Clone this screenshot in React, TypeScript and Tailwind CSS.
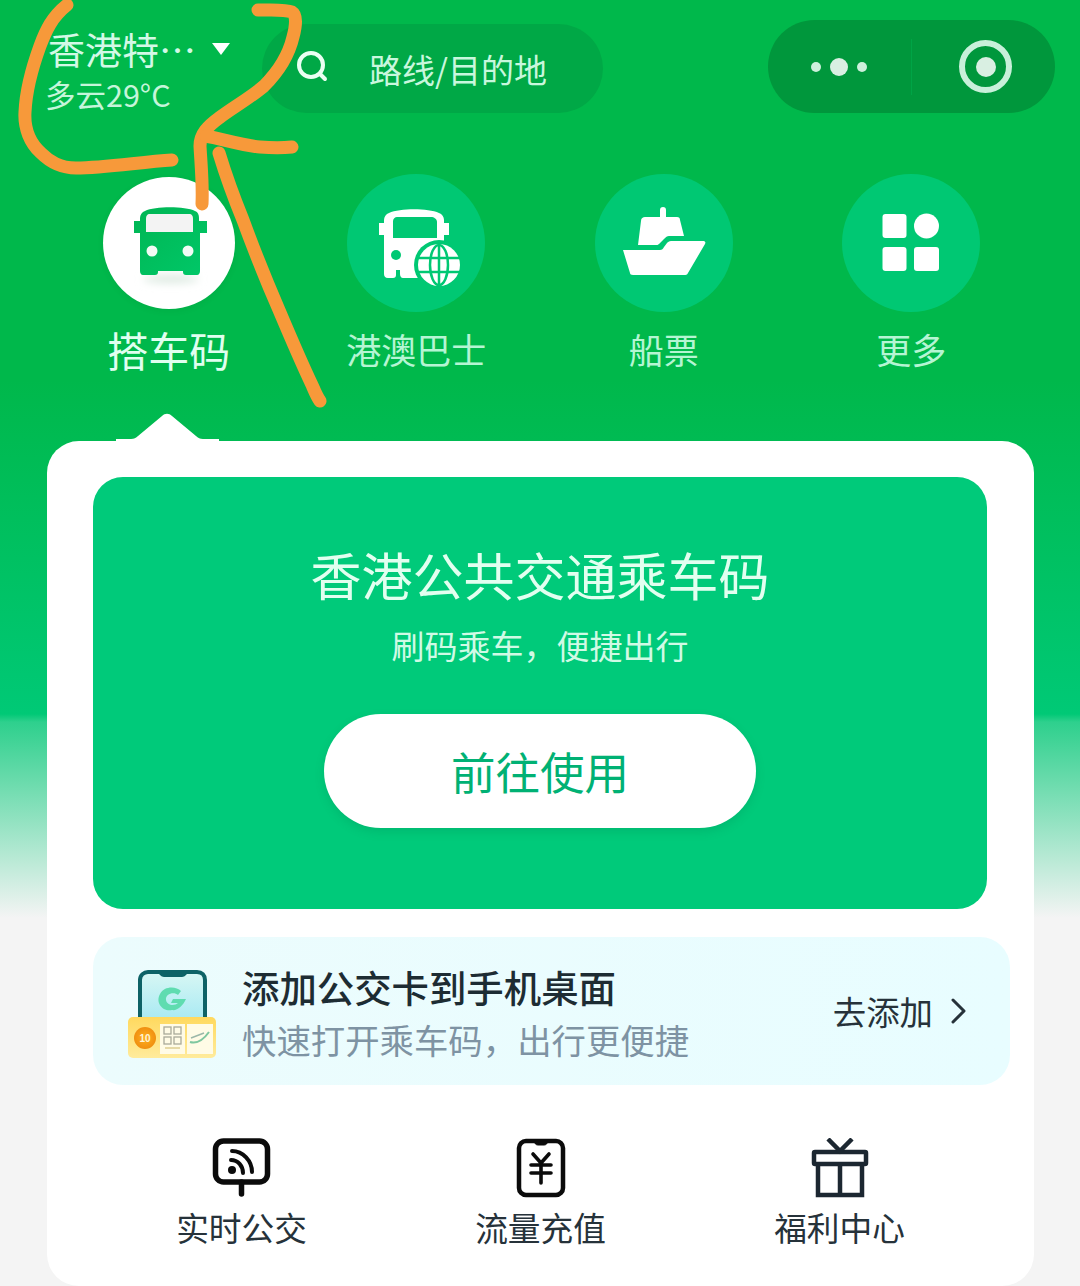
import React from "react";

const ORANGE = "#f7993a";

function Scribble() {
  return (
    <svg className="absolute left-0 top-0 pointer-events-none" width="340" height="420" viewBox="0 0 340 420" fill="none" stroke={ORANGE} strokeWidth="13" strokeLinecap="round" strokeLinejoin="round">
      <path d="M67 5C52 17 46 30 40 46C32 68 26 90 25 112C24 128 30 143 41 153C50 162 60 168 76 168C105 168 140 162 172 160" />
      <path d="M258 10C272 10 285 9 292 12C297 15 296 26 293 37C289 54 280 70 264 86C250 98 232 108 219 118C208 126 200 134 200 146C201 165 203 184 202 204" />
      <path d="M206 136C222 139 245 146 260 147C272 148 283 148 292 147" />
      <path d="M219 153C226 176 234 198 243 220C254 250 266 280 279 310C290 336 302 364 312 385C315 392 317 397 320 401" />
    </svg>
  );
}

function BusIcon() {
  return (
    <svg width="132" height="132" viewBox="103 177 132 132">
      <defs>
        <linearGradient id="busg" x1="0" y1="0" x2="1" y2="1">
          <stop offset="0" stopColor="#00b553" />
          <stop offset="1" stopColor="#00c868" />
        </linearGradient>
        <filter id="busb" x="-30%" y="-200%" width="160%" height="500%">
          <feGaussianBlur stdDeviation="4" />
        </filter>
      </defs>
      <ellipse cx="171" cy="279" rx="28" ry="4" fill="#dbe9e0" filter="url(#busb)" />
      <path d="M145 211C155 206 185 206 195 211C198 212 199 215 199 218V221H207V233H200V271C200 273 199 275 197 275H186C184 275 183 274 183 272V271H158V272C158 274 157 275 155 275H143C141 275 140 273 140 271V233H134V221H140V218C140 215 142 212 145 211Z" fill="url(#busg)" />
      <path d="M150 214H189C192 214 193 216 193 219V232H146V219C146 216 147 214 150 214Z" fill="#f3f3f3" />
      <circle cx="152" cy="251" r="5.5" fill="#f2fbf5" />
      <circle cx="188" cy="251" r="5.5" fill="#f2fbf5" />
    </svg>
  );
}

function BusGlobeIcon() {
  return (
    <svg width="138" height="138" viewBox="347 174 138 138">
      <path d="M389 213C400 208 428 208 439 213C442 214 444 217 444 220V223H449V235H444V270C444 274 442 278 438 278H403C401 278 400 276 400 274V270H396V275C396 277 395 278 393 278H388C385 278 384 276 384 274V235H379V223H384V220C384 217 386 214 389 213Z" fill="#fff" />
      <path d="M397 217H431C434 217 437 219 437 222V238H393V221C393 219 395 217 397 217Z" fill="#00c873" />
      <circle cx="396" cy="255" r="5" fill="#00c873" />
      <circle cx="439" cy="265" r="25" fill="#00c873" />
      <circle cx="439" cy="265" r="21" fill="#fff" />
      <g fill="none" stroke="#00c873" strokeWidth="2.5">
        <ellipse cx="439" cy="265" rx="9" ry="20" />
        <path d="M439 245V285M419 258H459M419 272H459" />
      </g>
    </svg>
  );
}

function ShipIcon() {
  return (
    <svg width="138" height="138" viewBox="595 174 138 138" fill="#fff">
      <path d="M660 214V210C660 208 661 207 663 207C665 207 666 208 666 210V217H677C679 217 680 218 680 220L684 236H669C667 236 666 237 664 239L659 244C658 245 657 245 656 245H638L641 221C641 218 643 217 645 217H660Z" />
      <path d="M623 250H660C662 250 663 249 664 247L667 243C668 242 669 241 671 241H703C705 241 706 242 705 244L688 273C687 275 686 275 684 275H633C631 275 630 274 630 273L623 250Z" />
    </svg>
  );
}

function MoreIcon() {
  return (
    <svg width="138" height="138" viewBox="842 174 138 138" fill="#fff">
      <rect x="882.5" y="214" width="24" height="24" rx="3" />
      <circle cx="926.5" cy="226" r="12.5" />
      <rect x="882.5" y="247" width="24" height="24" rx="3" />
      <rect x="914" y="247" width="25" height="24" rx="3" />
    </svg>
  );
}

function CardArt() {
  return (
    <svg width="92" height="94" viewBox="126 970 92 94" className="shrink-0">
      <defs>
        <linearGradient id="scr" x1="0" y1="0" x2="0" y2="1">
          <stop offset="0" stopColor="#d8f7f4" />
          <stop offset="1" stopColor="#a6e9f3" />
        </linearGradient>
        <linearGradient id="yel" x1="0" y1="0" x2="0" y2="1">
          <stop offset="0" stopColor="#ffd95e" />
          <stop offset="1" stopColor="#ffeb9c" />
        </linearGradient>
        <radialGradient id="coin">
          <stop offset="0" stopColor="#ffb020" />
          <stop offset="1" stopColor="#f08f10" />
        </radialGradient>
      </defs>
      <path d="M140 1024V982C140 977 144 974 148 974H197C202 974 205 977 205 982V1024Z" fill="url(#scr)" stroke="#0d6266" strokeWidth="4" />
      <path d="M158 974H188C186 978 184 979 181 979H165C162 979 160 978 158 974Z" fill="#0d6266" />
      <path d="M181 993C176 988 164 988 160 996C155 1005 163 1014 172 1012C177 1013 183 1008 186 1001H173L171 1005H178C175 1008 167 1008 166 1002C165 996 174 993 178 997Z" fill="#5fdcb0" />
      <rect x="128" y="1019" width="88" height="41" rx="5" fill="url(#yel)" />
      <circle cx="145" cy="1040" r="11" fill="url(#coin)" />
      <text x="145" y="1044" textAnchor="middle" fontSize="10" fontWeight="700" fill="#fff5d8" fontFamily="Liberation Sans, sans-serif">10</text>
      <rect x="160" y="1026" width="25" height="30" fill="#fffbe6" />
      <rect x="187" y="1026" width="26" height="30" fill="#fffbe6" />
      <g fill="none" stroke="#a9a99a" strokeWidth="1.3">
        <rect x="164" y="1029" width="7" height="7" />
        <rect x="174" y="1029" width="7" height="7" />
        <rect x="164" y="1039" width="7" height="7" />
        <rect x="174" y="1039" width="7" height="7" />
      </g>
      <path d="M165 1050H180" stroke="#e6d9a6" strokeWidth="2" />
      <path d="M190 1044C197 1046 204 1041 209 1034" stroke="#7fc7a0" strokeWidth="2" fill="none" />
      <path d="M191 1040L204 1035" stroke="#9bb7a8" strokeWidth="1.5" />
    </svg>
  );
}

function RssIcon() {
  return (
    <svg width="60" height="60" viewBox="212 1138 60 60" fill="none" stroke="#0b0b0b" strokeLinecap="round">
      <rect x="215.5" y="1141" width="52" height="41" rx="8" strokeWidth="5.5" />
      <path d="M241.5 1182V1194" strokeWidth="5.5" />
      <circle cx="232" cy="1170" r="4" fill="#0b0b0b" stroke="none" />
      <path d="M231 1160C238 1160 243 1166 243 1173" strokeWidth="4" />
      <path d="M232 1151C243 1151 252 1161 252 1172" strokeWidth="4" />
    </svg>
  );
}

function YenPhoneIcon() {
  return (
    <svg width="60" height="60" viewBox="511 1138 60 60" fill="none" stroke="#0b0b0b" strokeLinecap="round">
      <rect x="519" y="1141" width="44" height="54" rx="7" strokeWidth="4.5" />
      <path d="M534 1141H548C547 1144 546 1145 544 1145H538C536 1145 535 1144 534 1141Z" fill="#0b0b0b" strokeWidth="1" />
      <path d="M533 1154L541 1163L549 1154M531 1165H551M531 1173H551M541 1163V1183" strokeWidth="3.6" />
    </svg>
  );
}

function GiftIcon() {
  return (
    <svg width="60" height="60" viewBox="810 1138 60 60" fill="none" stroke="#1c2731" strokeWidth="4.5">
      <rect x="814" y="1152" width="52" height="12" rx="1" />
      <path d="M818 1164V1195H862V1164M840 1164V1195" />
      <path d="M828 1139L840 1151L852 1139" />
    </svg>
  );
}

function NavItem({ label, children }: { label: string; children: React.ReactNode }) {
  return (
    <div className="flex flex-col items-center">
      <div className="w-[138px] h-[138px] rounded-full bg-[#00c873]">{children}</div>
      <div className="mt-[12px] text-[35px] leading-[50px] text-[#b5f5d3] whitespace-nowrap">{label}</div>
    </div>
  );
}

function Tool({ label, children }: { label: string; children: React.ReactNode }) {
  return (
    <div className="flex flex-col items-center">
      {children}
      <div className="mt-[7px] text-[32.7px] leading-[44px] text-[#26323a] whitespace-nowrap">{label}</div>
    </div>
  );
}

export default function App() {
  return (
    <div className="relative w-[1080px] h-[1286px] overflow-hidden font-['Noto_Sans_CJK_SC','Noto_Sans',sans-serif] bg-[linear-gradient(180deg,#00b84b_0px,#00b84b_380px,#00c976_714px,#2ed08d_722px,#f4f4f4_918px)]">
      <div className="flex items-start pt-[20px] h-[113px]">
        <div className="w-[216px] ml-[46px] pt-[8px] shrink-0">
          <div className="flex items-center h-[42px] pl-[2px]">
            <span className="text-[37px] leading-[42px] text-[#d3f9e6] whitespace-nowrap">香港特…</span>
            <svg className="ml-[15px] -mt-[1px] shrink-0" width="20" height="14" viewBox="0 0 20 14"><path d="M1 1H19L10 13Z" fill="#fff" /></svg>
          </div>
          <div className="mt-[3px] -ml-[1px] text-[30.5px] leading-[42px] text-[#c5f5da] whitespace-nowrap">多云29°C</div>
        </div>
        <div className="mt-[4px] w-[341px] h-[89px] rounded-full bg-[#00a846] flex items-center shrink-0">
          <svg className="ml-[32px] -mt-[5px]" width="36" height="36" viewBox="0 0 36 36" fill="none" stroke="#eafff3" strokeLinecap="round">
            <circle cx="17" cy="17" r="12" strokeWidth="4" />
            <path d="M26 26L31 31" strokeWidth="4" />
          </svg>
          <span className="ml-[39px] text-[33px] leading-[44px] text-[#c8f7dd] whitespace-nowrap">路线/目的地</span>
        </div>
        <div className="ml-auto mr-[25px] w-[287px] h-[93px] rounded-full bg-[#00973c] flex items-center">
          <div className="w-[143px] h-full flex items-center justify-center gap-[9px] pr-[2px]">
            <span className="w-[10px] h-[10px] rounded-full bg-[#cdf0dc]" />
            <span className="w-[18px] h-[18px] rounded-full bg-[#d9efe2]" />
            <span className="w-[10px] h-[10px] rounded-full bg-[#cdf0dc]" />
          </div>
          <div className="w-px h-[56px] bg-[#00a446]" />
          <div className="flex-1 h-full flex items-center justify-center pl-[4px]">
            <div className="w-[53px] h-[53px] rounded-full border-[6px] border-[#c8f0da] flex items-center justify-center">
              <div className="w-[20px] h-[20px] rounded-full bg-[#d9efe2]" />
            </div>
          </div>
        </div>
      </div>

      <div className="mt-[61px] ml-[45px] w-[990px] grid grid-cols-4">
        <div className="flex flex-col items-center">
          <div className="mt-[3px] w-[132px] h-[132px] rounded-full bg-white shadow-[0_2px_6px_rgba(0,80,30,0.08)]"><BusIcon /></div>
          <div className="mt-[15px] text-[41px] leading-[50px] text-[#e0fff0] whitespace-nowrap">搭车码</div>
        </div>
        <NavItem label="港澳巴士"><BusGlobeIcon /></NavItem>
        <NavItem label="船票"><ShipIcon /></NavItem>
        <NavItem label="更多"><MoreIcon /></NavItem>
      </div>

      <div className="relative mt-[67px] ml-[47px] w-[987px] h-[845px] rounded-[32px] bg-white">
        <svg className="absolute left-[68px] -top-[28px]" width="106" height="29" viewBox="0 0 106 29">
          <path d="M1 29V26H16C19 26 21 25 23 23L47 3C50 0 54 0 57 3L81 23C83 25 85 26 88 26H104V29Z" fill="#fff" />
        </svg>

        <div className="pt-[36px] pl-[46px]">
          <div className="w-[894px] h-[432px] rounded-[30px] bg-[#00ca7a] flex flex-col items-center pt-[65px]">
            <div className="text-[51px] leading-[64px] text-[#e2fff0] whitespace-nowrap">香港公共交通乘车码</div>
            <div className="mt-[15px] text-[33px] leading-[48px] text-[#d0fae5] whitespace-nowrap">{"刷码乘车\uFF0C便捷出行"}</div>
            <div className="mt-[45px] w-[432px] h-[114px] rounded-full bg-white flex items-center justify-center shadow-[0_4px_10px_rgba(0,110,70,0.18)]">
              <span className="text-[44.5px] leading-[60px] text-[#00b174]">前往使用</span>
            </div>
          </div>
        </div>

        <div className="mt-[28px] ml-[46px] w-[917px] h-[148px] rounded-[30px] bg-[linear-gradient(90deg,#ecfcfd,#e8fdff)] flex items-center">
          <div className="ml-[33px] mt-[8px]"><CardArt /></div>
          <div className="ml-[24px] flex flex-col mt-[4px]">
            <div className="text-[37.4px] leading-[50px] font-medium text-[#1d2c33] whitespace-nowrap">添加公交卡到手机桌面</div>
            <div className="mt-[2px] text-[34.4px] leading-[50px] text-[#7e93a3] whitespace-nowrap">{"快速打开乘车码\uFF0C出行更便捷"}</div>
          </div>
          <div className="ml-auto mr-[44px] flex items-center">
            <span className="text-[33.4px] leading-[44px] text-[#26323a] whitespace-nowrap">去添加</span>
            <svg className="ml-[17px]" width="16" height="28" viewBox="0 0 16 28" fill="none" stroke="#26323a" strokeWidth="3" strokeLinecap="round" strokeLinejoin="round">
              <path d="M3 3L14 14L3 25" />
            </svg>
          </div>
        </div>

        <div className="mt-[53px] ml-[45px] w-[897px] grid grid-cols-3">
          <Tool label="实时公交"><RssIcon /></Tool>
          <Tool label="流量充值"><YenPhoneIcon /></Tool>
          <Tool label="福利中心"><GiftIcon /></Tool>
        </div>
      </div>

      <Scribble />
    </div>
  );
}
